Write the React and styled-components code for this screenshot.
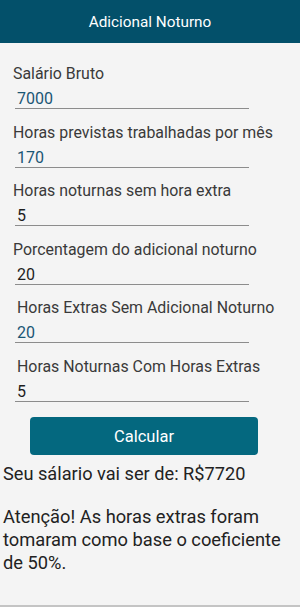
import React from "react";
import styled, { createGlobalStyle } from "styled-components";

const Global = createGlobalStyle`
  html, body { margin: 0; padding: 0; background: #f4f4f4; }
  body { font-family: Roboto, "Noto Sans", Arial, sans-serif; }
  * { box-sizing: border-box; }
`;

const Page = styled.div`
  width: 300px;
  height: 607px;
  display: flex;
  flex-direction: column;
  background: #f4f4f4;
  border-bottom: 2px solid #c4c4c4;
`;

const Header = styled.header`
  height: 43px;
  background: #03506a;
  color: #ffffff;
  display: flex;
  align-items: center;
  justify-content: center;
  font-size: 15.3px;
`;

const Form = styled.div`
  display: flex;
  flex-direction: column;
  padding-top: 21px;
`;

const Field = styled.div`
  display: flex;
  flex-direction: column;
  margin-bottom: 13.6px;
`;

const Label = styled.div`
  font-size: 15.9px;
  line-height: 19px;
  color: #3a3a3a;
  padding-left: ${(p) => p.$indent}px;
  white-space: nowrap;
`;

const ValueBox = styled.div`
  margin: 5px 0 0 15px;
  width: 234px;
  height: 21px;
  border-bottom: 1px solid #8c8c8c;
  font-size: 16px;
  line-height: 21px;
  padding-left: 2px;
  color: ${(p) => (p.$accent ? "#1b5674" : "#1e1e1e")};
`;

const Button = styled.button`
  align-self: flex-start;
  margin: 1.5px 0 0 30px;
  width: 228px;
  height: 38px;
  border: none;
  border-radius: 4px;
  background: #04687f;
  color: #ffffff;
  font-family: inherit;
  font-size: 16.5px;
`;

const Result = styled.p`
  margin: 7px 0 0 3px;
  font-size: 18.2px;
  line-height: 23px;
  color: #222;
`;

const Notice = styled.p`
  margin: 20px 0 0 3px;
  font-size: 18.3px;
  line-height: 23px;
  color: #222;
  width: 290px;
`;

const fields = [
  { label: "Salário Bruto", value: "7000", accent: true, indent: 13 },
  { label: "Horas previstas trabalhadas por mês", value: "170", accent: true, indent: 13 },
  { label: "Horas noturnas sem hora extra", value: "5", indent: 13 },
  { label: "Porcentagem do adicional noturno", value: "20", indent: 13 },
  { label: "Horas Extras Sem Adicional Noturno", value: "20", accent: true, indent: 17 },
  { label: "Horas Noturnas Com Horas Extras", value: "5", indent: 17 },
];

export default function App() {
  return (
    <>
      <Global />
      <Page>
        <Header>Adicional Noturno</Header>
        <Form>
          {fields.map((f) => (
            <Field key={f.label}>
              <Label $indent={f.indent}>{f.label}</Label>
              <ValueBox $accent={f.accent}>{f.value}</ValueBox>
            </Field>
          ))}
          <Button>Calcular</Button>
          <Result>Seu sálario vai ser de: R$7720</Result>
          <Notice>
            Atenção! As horas extras foram tomaram como base o coeficiente de 50%.
          </Notice>
        </Form>
      </Page>
    </>
  );
}
